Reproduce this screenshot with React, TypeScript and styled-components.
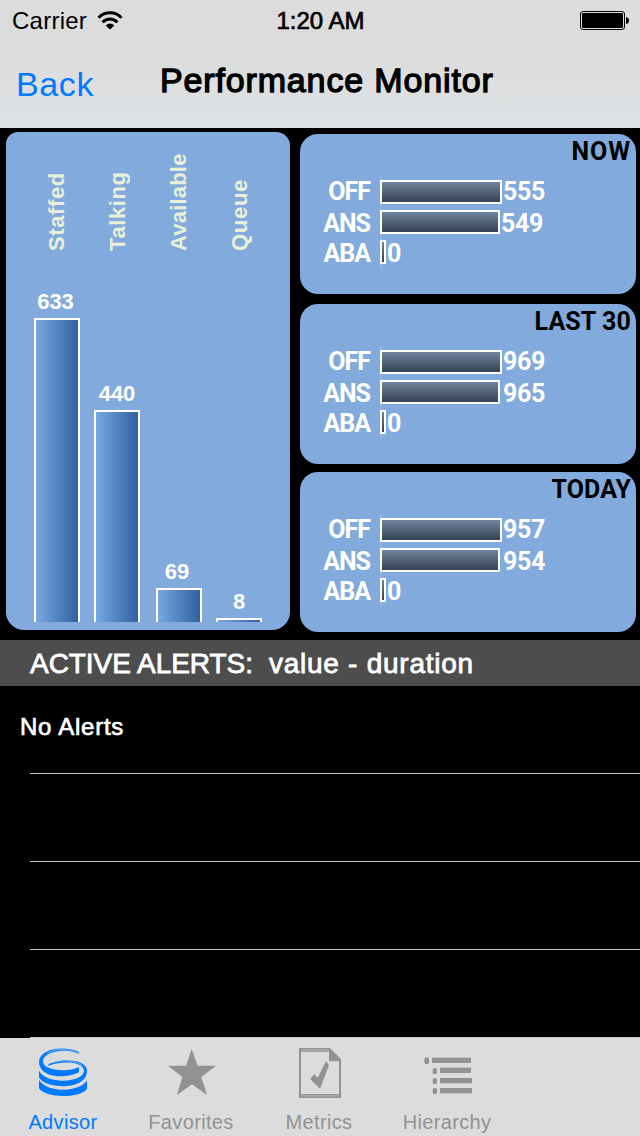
import React from 'react';
import styled, { createGlobalStyle } from 'styled-components';

const Global = createGlobalStyle`
  * { box-sizing: border-box; }
  body { margin: 0; background: #000; font-family: "Liberation Sans", Arial, sans-serif; }
`;

const Screen = styled.main`
  width: 640px;
  height: 1136px;
  display: flex;
  flex-direction: column;
  background: #000;
  overflow: hidden;
`;

const Header = styled.header`
  height: 128px;
  background: linear-gradient(#dcdcdc 0%, #dcdcdc 40%, #dde0e2 85%, #dfe3e6 100%);
`;

const StatusBar = styled.div`
  height: 40px;
  display: grid;
  grid-template-columns: 1fr auto 1fr;
  align-items: center;
  padding: 2px 11px 0 12px;
  font-size: 24px;
  line-height: 38px;
`;

const Carrier = styled.div`
  display: flex;
  align-items: center;
  gap: 10px;
  letter-spacing: 0.25px;
`;

const Clock = styled.div`
  -webkit-text-stroke: 0.7px #000;
`;

const Battery = styled.div`
  display: flex;
  justify-content: flex-end;
`;

const NavBar = styled.nav`
  height: 88px;
  display: grid;
  grid-template-columns: 144px auto 1fr;
  font-size: 34px;
  line-height: 40px;
`;

const BackButton = styled.a`
  padding: 24px 0 0 16px;
  color: #007aff;
  letter-spacing: 0.6px;
`;

const Title = styled.h1`
  margin: 0;
  padding: 20px 0 0 16px;
  font-size: 34px;
  font-weight: 400;
  letter-spacing: 0.85px;
  white-space: nowrap;
  -webkit-text-stroke: 1.3px #000;
`;

const Dashboard = styled.section`
  height: 512px;
  display: flex;
  gap: 10px;
  padding: 4px 4px 0 6px;
`;

const StaffCard = styled.div`
  width: 284px;
  height: 498px;
  padding: 0 28px 8px;
  display: flex;
  border-radius: 12px 14px 18px 18px;
  background: #82aadc;
`;

const StaffColumn = styled.div<{ $gap: number }>`
  width: 46px;
  margin-right: ${(p) => p.$gap}px;
  flex: none;
  display: flex;
  flex-direction: column;
  align-items: center;
`;

const StaffLabel = styled.div<{ $shift: number; $spacing: number }>`
  height: 119px;
  writing-mode: vertical-rl;
  transform: rotate(180deg);
  margin-left: ${(p) => p.$shift}px;
  font-size: 22px;
  line-height: 26px;
  font-weight: 700;
  letter-spacing: ${(p) => p.$spacing}px;
  color: #e8f0d8;
`;

const StaffValue = styled.div<{ $inset: number }>`
  margin: auto ${(p) => p.$inset}px 3px 0;
  font-size: 22px;
  line-height: 26px;
  font-weight: 700;
  color: #fff;
`;

const StaffBar = styled.div<{ $height: number }>`
  width: 46px;
  height: ${(p) => p.$height}px;
  border: 2px solid #fff;
  border-bottom: 0;
  background: linear-gradient(90deg, #78a8e2, #3060a0);
`;

const Intervals = styled.div`
  display: flex;
  flex-direction: column;
  padding-top: 2px;
`;

const IntervalCard = styled.div<{ $gap: number }>`
  width: 336px;
  height: 160px;
  margin-bottom: ${(p) => p.$gap}px;
  border-radius: 18px;
  background: #82aadc;
  font-family: Roboto, "Liberation Sans", sans-serif;
  font-size: 25px;
  font-weight: 700;
`;

const IntervalName = styled.div<{ $spacing: number }>`
  height: 42px;
  padding: 4px 5px 0 0;
  line-height: 28px;
  letter-spacing: ${(p) => p.$spacing}px;
  text-align: right;
  color: #000;
`;

const CallRows = styled.div`
  display: grid;
  grid-template-columns: 71px 1fr;
  column-gap: 9px;
  height: 92px;
`;

const CallLabels = styled.div`
  display: flex;
  flex-direction: column;
  padding: 1px 1px 0 0;
  align-items: flex-end;
  letter-spacing: -1px;
  color: #fff;
`;

const CallLabel = styled.span<{ $height: number }>`
  height: ${(p) => p.$height}px;
  line-height: 30px;
`;

const CallPlot = styled.div`
  display: flex;
  flex-direction: column;
  gap: 6px;
  padding-top: 4px;
  background: linear-gradient(#98b4dc, #98b4dc) left / 2px 100% no-repeat;
`;

const CallMeasure = styled.div<{ $gap?: number }>`
  height: 24px;
  display: flex;
  gap: ${(p) => p.$gap ?? 1}px;
`;

const CallBar = styled.div<{ $width: number }>`
  width: ${(p) => p.$width}px;
  height: 24px;
  border: 2px solid #fff;
  background: linear-gradient(#70859d, #354153);
`;

const CallValue = styled.span<{ $drop: number }>`
  line-height: 24px;
  padding-top: ${(p) => p.$drop}px;
  letter-spacing: -0.3px;
  color: #fff;
`;

const AlertsHeading = styled.h2`
  height: 46px;
  margin: 0;
  padding-left: 30px;
  display: flex;
  gap: 16px;
  background: #4d4d4d;
  color: #fff;
  font-size: 28px;
  font-weight: 400;
  line-height: 48px;
  white-space: nowrap;
  -webkit-text-stroke: 0.8px #fff;
`;

const HeadingPart = styled.span<{ $spacing: number }>`
  letter-spacing: ${(p) => p.$spacing}px;
`;

const AlertList = styled.ul`
  flex: 1;
  margin: 0;
  padding: 0;
  list-style: none;
`;

const AlertRow = styled.li`
  height: 88px;
  padding-left: 20px;
  color: #fff;
  font-size: 24px;
  line-height: 82px;
  letter-spacing: 0.75px;
  -webkit-text-stroke: 0.7px #fff;
  background: linear-gradient(#c8c7cc, #c8c7cc) 30px 87px / 610px 1px no-repeat;
`;

const TabBar = styled.footer`
  height: 98px;
  display: flex;
  background: #dcdcdc;
`;

const Tab = styled.a<{ $active?: boolean }>`
  width: 128px;
  padding: 6px 2px 0 0;
  display: flex;
  flex-direction: column;
  align-items: center;
  color: ${(p) => (p.$active ? '#007aff' : '#929292')};
  font-size: 20px;
  line-height: 24px;
  letter-spacing: 0.35px;
  white-space: nowrap;
`;

const TabIcon = styled.svg`
  width: 56px;
  height: 56px;
  flex: none;
  margin-bottom: 10px;
  fill: currentColor;
`;

const staff = [
  { label: 'Staffed', value: 633, height: 304, gap: 14, shift: 0, spacing: 0.6, inset: 3 },
  { label: 'Talking', value: 440, height: 212, gap: 16, shift: 2, spacing: 0.6, inset: 0 },
  { label: 'Available', value: 69, height: 34, gap: 14, shift: 0, spacing: 0.2, inset: 4 },
  { label: 'Queue', value: 8, height: 4, gap: 0, shift: 2, spacing: 0.7, inset: 0 },
];

const intervals = [
  { name: 'NOW', off: 555, ans: 549, aba: 0, gap: 10, spacing: 0.9, ansGap: 1 },
  { name: 'LAST 30', off: 969, ans: 965, aba: 0, gap: 8, spacing: 0.1, ansGap: 3 },
  { name: 'TODAY', off: 957, ans: 954, aba: 0, gap: 0, spacing: 0.1, ansGap: 3 },
];

export default function App() {
  return (
    <Screen>
      <Global />
      <Header>
        <StatusBar>
          <Carrier>
            Carrier
            <svg width="26" height="20" viewBox="0 0 26 20" fill="none" stroke="#000" strokeWidth="3">
              <path d="M1.5 6.700C8 .2 18 .2 24.500 6.700" />
              <path d="M5.600 11.300C10 7 16 7 20.400 11.300" />
              <path d="M13 18.500L8.700 14.400Q13 10.600 17.300 14.400Z" fill="#000" stroke="none" />
            </svg>
          </Carrier>
          <Clock>1:20 AM</Clock>
          <Battery>
            <svg width="50" height="20" viewBox="0 0 50 20">
              <rect x="1.500" y=".5" width="44" height="18" rx="2.500" fill="none" stroke="#000" />
              <rect x="3" y="2" width="41" height="15" rx="1" />
              <path d="M47 6Q50 6.500 50 9.500T47 13Z" />
            </svg>
          </Battery>
        </StatusBar>
        <NavBar>
          <BackButton>Back</BackButton>
          <Title>Performance Monitor</Title>
        </NavBar>
      </Header>

      <Dashboard>
        <StaffCard>
          {staff.map((s) => (
            <StaffColumn key={s.label} $gap={s.gap}>
              <StaffLabel $shift={s.shift} $spacing={s.spacing}>{s.label}</StaffLabel>
              <StaffValue $inset={s.inset}>{s.value}</StaffValue>
              <StaffBar $height={s.height} />
            </StaffColumn>
          ))}
        </StaffCard>
        <Intervals>
          {intervals.map((i) => (
            <IntervalCard key={i.name} $gap={i.gap}>
              <IntervalName $spacing={i.spacing}>{i.name}</IntervalName>
              <CallRows>
                <CallLabels>
                  <CallLabel $height={32}>OFF</CallLabel>
                  <CallLabel $height={30}>ANS</CallLabel>
                  <CallLabel $height={30}>ABA</CallLabel>
                </CallLabels>
                <CallPlot>
                  <CallMeasure>
                    <CallBar $width={122} />
                    <CallValue $drop={0}>{i.off}</CallValue>
                  </CallMeasure>
                  <CallMeasure $gap={i.ansGap}>
                    <CallBar $width={120} />
                    <CallValue $drop={2}>{i.ans}</CallValue>
                  </CallMeasure>
                  <CallMeasure>
                    <CallBar $width={6} />
                    <CallValue $drop={2}>{i.aba}</CallValue>
                  </CallMeasure>
                </CallPlot>
              </CallRows>
            </IntervalCard>
          ))}
        </Intervals>
      </Dashboard>

      <AlertsHeading>
        <HeadingPart $spacing={-0.05}>ACTIVE ALERTS:</HeadingPart>
        <HeadingPart $spacing={0.75}>value - duration</HeadingPart>
      </AlertsHeading>
      <AlertList>
        <AlertRow>No Alerts</AlertRow>
        <AlertRow />
        <AlertRow />
        <AlertRow />
      </AlertList>

      <TabBar>
        <Tab $active>
          <TabIcon viewBox="105 42 168 168">
            <path d="M237 66C205 48 123 50 117 93C116 126 150 139 180 139C205 139 225 134 237 127V111C218 122 168 126 142 112C116 95 128 66 190 62C212 62 226 66 237 72Z" />
            <path d="M145 103C175 84 258 84 261 121C262 157 222 169 190 169C155 169 122 157 117 142V122C130 147 170 152 190 152C225 152 253 140 252 121C248 94 190 91 145 107Z" />
            <path d="M117 149C130 172 165 179 190 179C225 179 251 168 261 151V176C252 191 220 198 190 198C155 198 127 190 117 175Z" />
            <path d="M142 69C168 55 210 55 237 69M155 99C182 89 229 91 247 106" fill="none" stroke="#dcdcdc" strokeWidth="1.500" />
          </TabIcon>
          Advisor
        </Tab>
        <Tab>
          <TabIcon viewBox="99 42 168 168">
            <path d="M185 57L203 107H258L214 141L231 195L186 163L141 195L157 141L114 107H168Z" />
          </TabIcon>
          Favorites
        </Tab>
        <Tab>
          <TabIcon viewBox="93 42 168 168">
            <path fillRule="evenodd" d="M117 54H210L243 87V204H117ZM123 65V192H237V94H207V65Z" />
            <path d="M123 59.500H207M123 197.500H237" stroke="#b4b4b4" strokeWidth="4" />
            <path d="M151 148L162 132L173 143L198 94L207 106L180 176Z" />
          </TabIcon>
          Metrics
        </Tab>
        <Tab>
          <TabIcon viewBox="87 42 168 168">
            <rect x="103" y="82" width="14" height="20" rx="6" />
            <rect x="126" y="83" width="117" height="16" />
            <rect x="128" y="114" width="13" height="19" rx="6" />
            <rect x="150" y="113" width="93" height="16" />
            <rect x="128" y="144" width="13" height="19" rx="6" />
            <rect x="150" y="144" width="96" height="16" />
            <rect x="128" y="174" width="13" height="19" rx="6" />
            <rect x="150" y="174" width="96" height="16" />
          </TabIcon>
          Hierarchy
        </Tab>
      </TabBar>
    </Screen>
  );
}
